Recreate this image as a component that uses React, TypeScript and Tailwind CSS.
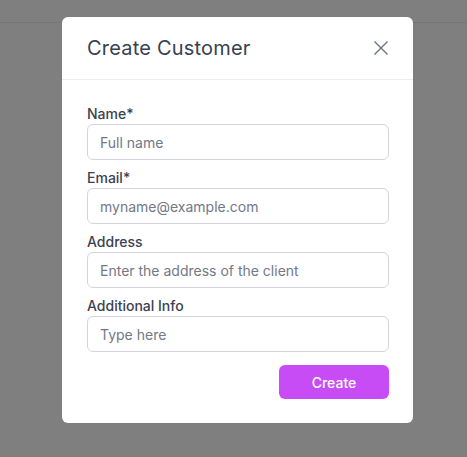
import React from "react";

const font = { fontFamily: "Inter, 'Noto Sans', sans-serif" };

function Field({ label, placeholder }: { label: string; placeholder: string }) {
  return (
    <div className="flex flex-col">
      <label className="text-[14px] leading-5 font-medium text-[#3b4250]">{label}</label>
      <input
        className="h-9 w-full rounded-md border border-[#d1d5db] px-3 text-[14px] text-[#374151] placeholder:text-[#737887] outline-none"
        placeholder={placeholder}
      />
    </div>
  );
}

export default function App() {
  return (
    <div className="relative h-[457px] w-[467px] overflow-hidden bg-[#7f7f7f]" style={font}>
      <div className="h-[23px] border-b border-[#767676]" />
      <div className="absolute left-[62px] top-[17px] w-[351px] rounded-md bg-white">
        <div className="flex h-[63px] items-center justify-between border-b border-[#ececec] pl-[25px] pr-[24px]">
          <h2 className="text-[20px] font-normal tracking-[0.2px] text-[#374151]">Create Customer</h2>
          <button className="text-[#6b7280]">
            <svg width="16" height="16" viewBox="0 0 16 16" fill="none" stroke="currentColor" strokeWidth="1.4">
              <path d="M1.5 1.5L14.5 14.5M14.5 1.5L1.5 14.5" />
            </svg>
          </button>
        </div>
        <div className="flex flex-col gap-2 px-[24px] pb-6 pl-[25px] pt-6">
          <Field label="Name*" placeholder="Full name" />
          <Field label="Email*" placeholder="myname@example.com" />
          <Field label="Address" placeholder="Enter the address of the client" />
          <Field label="Additional Info" placeholder="Type here" />
          <div className="mt-[5px] flex justify-end">
            <button className="h-[34px] w-[110px] rounded-md bg-[#c84cf6] text-[14px] font-medium text-white">
              Create
            </button>
          </div>
        </div>
      </div>
    </div>
  );
}
